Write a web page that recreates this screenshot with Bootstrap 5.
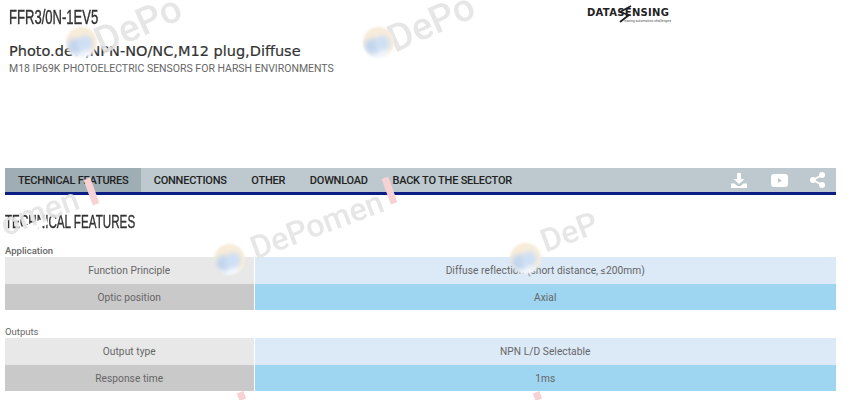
<!DOCTYPE html>
<html lang="en">
<head>
<meta charset="utf-8">
<title>FFR3/0N-1EV5</title>
<link href="https://cdn.jsdelivr.net/npm/bootstrap@5.3.0/dist/css/bootstrap.min.css" rel="stylesheet">
<style>
html,body{height:400px;overflow:hidden;background:#fff}
body{font-family:Roboto,"Liberation Sans",sans-serif;color:#555;position:relative}
.page-wrap{width:831px;margin-left:5px}
.prod-code{font-family:"Liberation Sans",sans-serif;font-size:19.5px;line-height:22px;color:#333;margin:6px 0 0 4px;font-weight:400;transform:scaleX(.67);transform-origin:0 50%;-webkit-text-stroke:.4px #333;white-space:nowrap}
.prod-name{font-family:"DejaVu Sans",sans-serif;font-size:14.5px;line-height:20px;color:#333;margin:13px 0 0 4px;font-weight:400;-webkit-text-stroke:.2px #333}
.prod-sub{font-size:10.5px;line-height:12px;color:#666;margin:2px 0 0 4px}
.brand-col{position:absolute;left:587px;top:7px;width:84px;color:#222}
.brand-word{display:block;font-family:"DejaVu Sans",sans-serif;font-weight:700;font-size:10px;line-height:12px;letter-spacing:.3px;white-space:nowrap}
.brand-tag{display:block;font-size:3.5px;line-height:4px;text-align:right;color:#555;white-space:nowrap}
.brand-swoosh{position:absolute;left:30px;top:-2px;fill:none;stroke:#222;stroke-width:1.800}
.tab-bar{margin-top:93px;height:27px;background:#bdc9cf;border-bottom:3px solid #0b1c85}
.tab-bar .nav-link{padding:0 12.3px;height:24px;line-height:26px;font-size:11px;letter-spacing:-.22px;font-weight:500;color:#222;white-space:nowrap}
.tab-bar .nav-link.is-current{background:#9fadb4;padding:0 12.9px}
.tab-icons svg{display:block;fill:#fff}
.sec-title{font-family:"Liberation Sans",sans-serif;font-size:18.500px;line-height:22px;font-weight:400;color:#333;margin:16px 0 0;transform:scaleX(.63);transform-origin:0 50%;-webkit-text-stroke:.4px #333;white-space:nowrap}
.grp-label{font-size:9.5px;line-height:12px;color:#666;margin:0;font-weight:500}
.grp-one{margin-top:12px}
.grp-two{margin-top:16px;font-weight:400}
.spec-table{table-layout:fixed;width:831px;margin:0;color:#555}
.spec-table td{padding:2px 0 0;height:26.5px;line-height:24.5px;font-size:10.2px;letter-spacing:.05px;text-align:center;border:0;color:#666}
.spec-table td:first-child{width:249px;border-right:1px solid #fff}
.spec-table tr.tone-a td:first-child{--bs-table-bg:#e8e8e8}
.spec-table tr.tone-a td:last-child{--bs-table-bg:#dce9f7}
.spec-table tr.tone-b td:first-child{--bs-table-bg:#c9c9c9}
.spec-table tr.tone-b td:last-child{--bs-table-bg:#9ed5f0}
.wm{position:absolute;pointer-events:none;white-space:nowrap;transform-origin:0 100%;transform:rotate(-20.500deg);font-family:Roboto,sans-serif;font-weight:500;font-size:32px;line-height:36px;color:#e4e4e4;opacity:.9}
.wm-top{font-size:38px;line-height:42px;transform:rotate(-24deg)}
.wm-bar{position:absolute;width:7px;height:27px;background:#f7d2d4;transform:rotate(-20deg);pointer-events:none}
.wm-bar-low{height:8px}
.wm-globe{position:absolute;width:31px;height:31px;border-radius:50%;pointer-events:none;filter:blur(1px);background:radial-gradient(circle at 62% 52%,#cfe0f4 0 16%,rgba(207,224,244,0) 42%),radial-gradient(circle at 30% 62%,#c4d6ee 0 14%,rgba(196,214,238,0) 38%),radial-gradient(circle at 50% 90%,#f2f6fb 0 20%,rgba(242,246,251,0) 45%),#f7ecd9}
.wm-mask{position:absolute;background:#fff;pointer-events:none;transform:rotate(-20deg)}
</style>
</head>
<body>
<div class="page-wrap">
  <h1 class="prod-code">FFR3/0N-1EV5</h1>
  <h2 class="prod-name">Photo.dev.,NPN-NO/NC,M12 plug,Diffuse</h2>
  <p class="prod-sub">M18 IP69K PHOTOELECTRIC SENSORS FOR HARSH ENVIRONMENTS</p>

  <div class="d-flex justify-content-between tab-bar">
    <nav class="nav">
      <a class="nav-link is-current" href="#">TECHNICAL FEATURES</a>
      <a class="nav-link" href="#">CONNECTIONS</a>
      <a class="nav-link" href="#">OTHER</a>
      <a class="nav-link" href="#">DOWNLOAD</a>
      <a class="nav-link" href="#">BACK TO THE SELECTOR</a>
    </nav>
    <div class="d-flex align-items-center tab-icons">
      <svg width="16" height="16" viewBox="0 0 16 16" style="margin-right:24px"><path d="M6 1h4v6h3.500L8 12 2.500 7H6z"/><path d="M0 11.500h3.500L6.500 14h3l3-2.500H16V16H0z"/></svg>
      <svg width="17" height="13" viewBox="0 0 17 13" style="margin-right:22px"><path fill-rule="evenodd" d="M3 0h11a3 3 0 0 1 3 3v7a3 3 0 0 1-3 3H3a3 3 0 0 1-3-3V3a3 3 0 0 1 3-3zm4 4v5l4-2.500z"/></svg>
      <svg width="15" height="16" viewBox="0 0 15 16" style="margin-right:11px"><circle cx="12" cy="3" r="3"/><circle cx="3" cy="8" r="3"/><circle cx="12" cy="13" r="3"/><path d="M12 3 3 8l9 5" fill="none" stroke="#fff" stroke-width="1.800"/></svg>
    </div>
  </div>

  <h3 class="sec-title">TECHNICAL FEATURES</h3>

  <p class="grp-label grp-one">Application</p>
  <table class="table spec-table">
    <tbody>
      <tr class="tone-a"><td>Function Principle</td><td>Diffuse reflection (short distance, ≤200mm)</td></tr>
      <tr class="tone-b"><td>Optic position</td><td>Axial</td></tr>
    </tbody>
  </table>

  <p class="grp-label grp-two">Outputs</p>
  <table class="table spec-table">
    <tbody>
      <tr class="tone-a"><td>Output type</td><td>NPN L/D Selectable</td></tr>
      <tr class="tone-b"><td>Response time</td><td>1ms</td></tr>
    </tbody>
  </table>
</div>

<div class="brand-col">
  <span class="brand-word">DATASENSING</span>
  <span class="brand-tag">easing automation challenges</span>
  <svg class="brand-swoosh" width="16" height="18" viewBox="0 0 16 18"><path d="M14 1 3 7l9 3-9 7"/></svg>
</div>

<div class="wm-mask" style="left:22px;top:222px;width:26px;height:7px"></div>
<div class="wm wm-top" style="left:105px;top:20px">DePo</div>
<div class="wm wm-top" style="left:398px;top:18px">DePo</div>
<div class="wm" style="left:258px;top:230px">DePomen</div>
<div class="wm" style="left:548px;top:223px">DeP</div>
<div class="wm" style="left:8px;top:207px">omen</div>
<div class="wm-bar" style="left:88px;top:178px"></div>
<div class="wm-bar" style="left:386px;top:177px"></div>
<div class="wm-bar wm-bar-low" style="left:238px;top:392px"></div>
<div class="wm-bar wm-bar-low" style="left:534px;top:392px"></div>
<div class="wm-globe" style="left:66px;top:27px"></div>
<div class="wm-globe" style="left:363px;top:27px"></div>
<div class="wm-globe" style="left:214px;top:244px"></div>
<div class="wm-globe" style="left:510px;top:243px"></div>
</body>
</html>
